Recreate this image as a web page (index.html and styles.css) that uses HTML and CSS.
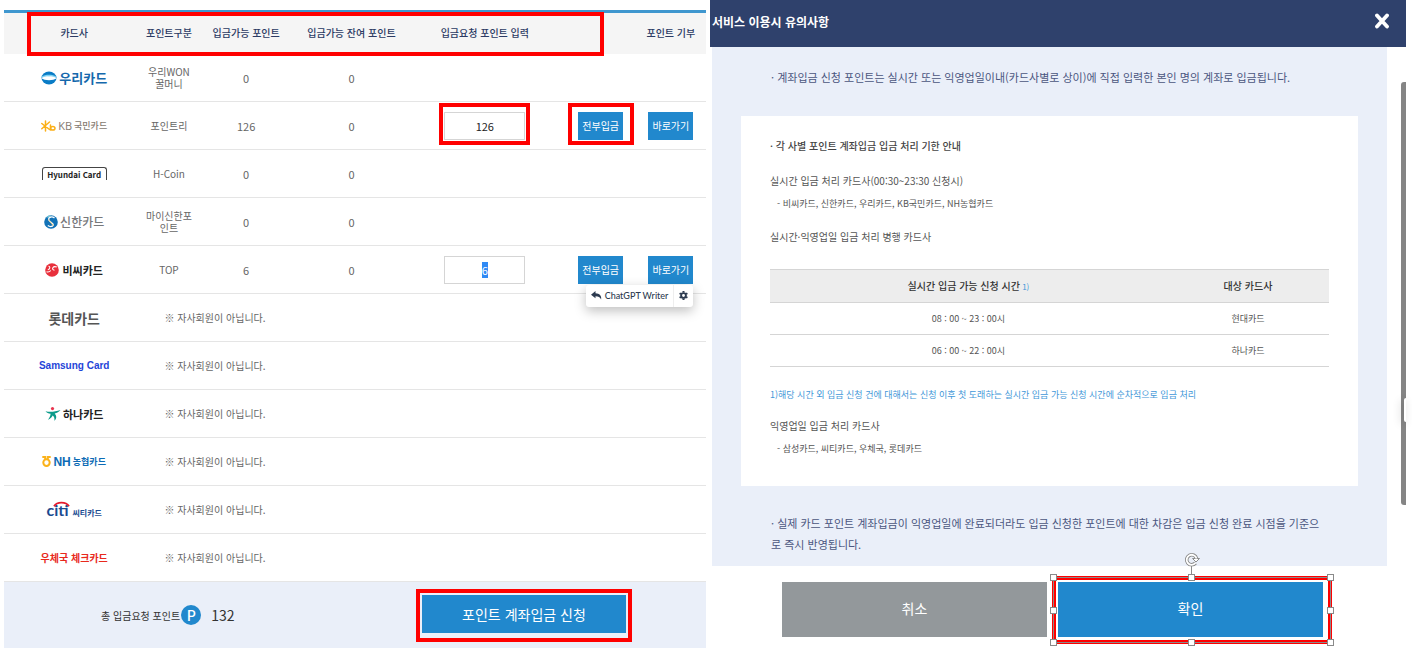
FILE: index.html
```
<!DOCTYPE html>
<html lang="ko">
<head>
    <meta charset="UTF-8">
    <meta name="viewport" content="width=device-width, initial-scale=1.0">
    <title>포인트 계좌입금 신청</title>
    <link rel="stylesheet" href="styles.css">
</head>
<body>
    <main class="page">
        <section class="points">
            <div class="table-wrap">
                <table class="point-table">
                    <colgroup>
                        <col class="col-card">
                        <col class="col-type">
                        <col class="col-avail">
                        <col class="col-remain">
                        <col class="col-input">
                        <col class="col-all">
                        <col class="col-give">
                    </colgroup>
                    <thead>
                        <tr>
                            <th>카드사</th>
                            <th>포인트구분</th>
                            <th>입금가능 포인트</th>
                            <th>입금가능 잔여 포인트</th>
                            <th>입금요청 포인트 입력</th>
                            <th></th>
                            <th>포인트 기부</th>
                        </tr>
                    </thead>
                    <tbody>
                        <tr>
                            <td>
                                <span class="brand brand-woori">
                                    <svg width="16" height="14" viewBox="0 0 16 14">
                                        <ellipse cx="8" cy="7" rx="7.5" ry="6.5" fill="#0a7cc6"/>
                                        <path d="M1 5.500C4 3 12 3 15 5.500L15.400 7Q8 3.800.6 7Z" fill="#7fd3f3"/>
                                        <path d="M.4 7.200C4 4.600 12 4.600 15.600 7.200C12.500 9.800 3.500 9.800.4 7.200Z" fill="#fff"/>
                                    </svg>우리카드
                                </span>
                            </td>
                            <td>우리WON<br>꿀머니</td>
                            <td class="num">0</td>
                            <td class="num">0</td>
                            <td></td>
                            <td></td>
                            <td></td>
                        </tr>
                        <tr>
                            <td>
                                <span class="brand brand-kb">
                                    <svg width="15" height="12" viewBox="0 0 15 12" fill="none" stroke="#fbaf17" stroke-width="1.500" stroke-linecap="round">
                                        <path d="M4.500 1v10M.8 3.500L8.500 9.500M.8 8.800L8.500 2M9.500 5V10"/>
                                        <ellipse cx="11.800" cy="8.300" rx="2.200" ry="1.800"/>
                                    </svg><b>KB</b><small>국민카드</small>
                                </span>
                            </td>
                            <td>포인트리</td>
                            <td class="num">126</td>
                            <td class="num">0</td>
                            <td>
                                <span class="marked marked-input">
                                    <input class="point-input" type="text" value="126" aria-label="KB국민카드 입금요청 포인트">
                                </span>
                            </td>
                            <td>
                                <span class="marked marked-button">
                                    <button class="btn-small" type="button">전부입금</button>
                                </span>
                            </td>
                            <td><button class="btn-small" type="button">바로가기</button></td>
                        </tr>
                        <tr>
                            <td><span class="brand brand-hyundai">Hyundai Card</span></td>
                            <td>H-Coin</td>
                            <td class="num">0</td>
                            <td class="num">0</td>
                            <td></td>
                            <td></td>
                            <td></td>
                        </tr>
                        <tr>
                            <td>
                                <span class="brand brand-shinhan">
                                    <svg width="14" height="14" viewBox="0 0 14 14">
                                        <circle cx="7" cy="7" r="6.800" fill="#1272b6"/>
                                        <path d="M2 2.200A6.800 6.800 0 0 1 7 .2L6 3z" fill="#74c4d8"/>
                                        <path d="M10.500 3C7.500.8 3.500 2.600 5 5.300s5 2.800 4.200 5C8.500 12 5.500 11.800 3.800 10.500" fill="none" stroke="#fff" stroke-width="1.300"/>
                                        <path d="M4.500 4.500L9.500 11" stroke="#e0c98a" stroke-width="1"/>
                                    </svg>신한카드
                                </span>
                            </td>
                            <td>마이신한포인트</td>
                            <td class="num">0</td>
                            <td class="num">0</td>
                            <td></td>
                            <td></td>
                            <td></td>
                        </tr>
                        <tr>
                            <td>
                                <span class="brand brand-bc">
                                    <svg width="14" height="14" viewBox="0 0 14 14">
                                        <circle cx="7" cy="7" r="6.800" fill="#e8303c"/>
                                        <path d="M3.500 3.200C5.500 3.500 5 6 2.800 6.800M11.800 4C8 2.500 5.800 6.500 9.500 7.200M1.500 8.800C3.500 9.300 4.800 8.800 5.800 7.500" fill="none" stroke="#fff" stroke-width="1.100"/>
                                    </svg>비씨카드
                                </span>
                            </td>
                            <td>TOP</td>
                            <td class="num">6</td>
                            <td class="num">0</td>
                            <td><input class="point-input" id="bcPoint" type="text" value="6" aria-label="비씨카드 입금요청 포인트"></td>
                            <td><button class="btn-small" type="button">전부입금</button></td>
                            <td>
                                <div class="give">
                                    <button class="btn-small" type="button">바로가기</button>
                                    <div class="writer">
                                        <button class="writer-main" type="button">
                                            <svg width="11" height="9" viewBox="0 0 11 9"><path d="M4.500 0L0 3.700l4.500 3.600V5.200c3 0 4.500.8 5.600 3.300C10.800 4.800 8.500 2.500 4.500 2.300z" fill="#2d3b50"/></svg>
                                            ChatGPT Writer
                                        </button>
                                        <button class="writer-set" type="button" aria-label="설정">
                                            <svg width="9" height="9" viewBox="0 0 9 9"><circle cx="4.500" cy="4.500" r="2.400" fill="none" stroke="#2d3b50" stroke-width="1.900"/><path d="M4.500 0v1.500M4.500 7.500V9M.6 2.250l1.300.75M7.100 6l1.300.75M.6 6.750L1.900 6M7.100 3l1.300-.75" stroke="#2d3b50" stroke-width="2"/></svg>
                                        </button>
                                    </div>
                                </div>
                            </td>
                        </tr>
                        <tr>
                            <td><span class="brand brand-lotte">롯데카드</span></td>
                            <td class="notice" colspan="6">※ 자사회원이 아닙니다.</td>
                        </tr>
                        <tr>
                            <td><span class="brand brand-samsung">Samsung Card</span></td>
                            <td class="notice" colspan="6">※ 자사회원이 아닙니다.</td>
                        </tr>
                        <tr>
                            <td>
                                <span class="brand brand-hana">
                                    <svg width="16" height="14" viewBox="0 0 16 14">
                                        <circle cx="7.500" cy="1.600" r="1.600" fill="#e8344e"/>
                                        <path d="M.5 4.200C5 5.500 10 4.800 15.500 3c-1.500 2-3.500 3-5.800 3.500 2 2.300 2.300 5-.4 7.300.6-2.200-.1-4-1.600-5.300C6.500 10.500 5.300 12 3 12.800c1.500-2 2.500-4 2.600-6C3.500 6.600 1.700 5.800.5 4.200z" fill="#0b9b8a"/>
                                    </svg>하나카드
                                </span>
                            </td>
                            <td class="notice" colspan="6">※ 자사회원이 아닙니다.</td>
                        </tr>
                        <tr>
                            <td>
                                <span class="brand brand-nh">
                                    <svg width="9" height="11" viewBox="0 0 9 11" fill="none" stroke="#fbb21a" stroke-width="2">
                                        <path d="M.3 1H3.200V3M8.700 1H5.800V3"/>
                                        <ellipse cx="4.500" cy="6.600" rx="3.200" ry="3.300"/>
                                    </svg><b>NH</b><small>농협카드</small>
                                </span>
                            </td>
                            <td class="notice" colspan="6">※ 자사회원이 아닙니다.</td>
                        </tr>
                        <tr>
                            <td>
                                <span class="brand brand-citi">
                                    <span class="citi-word">citi
                                        <svg width="17" height="6" viewBox="0 0 17 6"><path d="M1 5.200C4 .3 13 .3 16 5.200" fill="none" stroke="#e31b2d" stroke-width="1.700"/></svg>
                                    </span><small>씨티카드</small>
                                </span>
                            </td>
                            <td class="notice" colspan="6">※ 자사회원이 아닙니다.</td>
                        </tr>
                        <tr>
                            <td><span class="brand brand-post">우체국 체크카드</span></td>
                            <td class="notice" colspan="6">※ 자사회원이 아닙니다.</td>
                        </tr>
                    </tbody>
                </table>
                <span class="head-mark"></span>
            </div>
            <div class="total">
                <span>총 입금요청 포인트</span>
                <span class="p-icon">P</span>
                <span class="total-num">132</span>
                <span class="marked marked-apply">
                    <button class="btn-apply" type="button">포인트 계좌입금 신청</button>
                </span>
            </div>
        </section>

        <section class="modal">
            <header class="modal-head">
                <h2>서비스 이용시 유의사항</h2>
                <button class="btn-close" type="button" aria-label="닫기">
                    <svg width="14" height="16" viewBox="0 0 14 16"><path d="M2 2.500L12 13.500M12 2.500L2 13.500" stroke="#fff" stroke-width="3.800" stroke-linecap="round"/></svg>
                </button>
            </header>
            <div class="modal-body">
                <p class="guide">· 계좌입금 신청 포인트는 실시간 또는 익영업일이내(카드사별로 상이)에 직접 입력한 본인 명의 계좌로 입금됩니다.</p>
                <div class="info">
                    <h3>· 각 사별 포인트 계좌입금 입금 처리 기한 안내</h3>
                    <p class="info-title">실시간 입금 처리 카드사(00:30~23:30 신청시)</p>
                    <p class="info-sub">- 비씨카드, 신한카드, 우리카드, KB국민카드, NH농협카드</p>
                    <p class="info-title">실시간·익영업일 입금 처리 병행 카드사</p>
                    <table class="time-table">
                        <thead>
                            <tr>
                                <th class="col-time">실시간 입금 가능 신청 시간<span class="ref"> 1)</span></th>
                                <th>대상 카드사</th>
                            </tr>
                        </thead>
                        <tbody>
                            <tr>
                                <td>08 : 00 ~ 23 : 00시</td>
                                <td>현대카드</td>
                            </tr>
                            <tr>
                                <td>06 : 00 ~ 22 : 00시</td>
                                <td>하나카드</td>
                            </tr>
                        </tbody>
                    </table>
                    <p class="info-note">1)해당 시간 외 입금 신청 건에 대해서는 신청 이후 첫 도래하는 실시간 입금 가능 신청 시간에 순차적으로 입금 처리</p>
                    <p class="info-next">익영업일 입금 처리 카드사</p>
                    <p class="info-sub">- 삼성카드, 씨티카드, 우체국, 롯데카드</p>
                </div>
                <p class="guide guide-last">· 실제 카드 포인트 계좌입금이 익영업일에 완료되더라도 입금 신청한 포인트에 대한 차감은 입금 신청 완료 시점을 기준으로 즉시 반영됩니다.</p>
            </div>
            <div class="modal-buttons">
                <button class="btn-cancel" type="button">취소</button>
                <div class="confirm">
                    <button class="btn-ok" type="button">확인</button>
                    <div class="select-box">
                        <svg class="rotate" width="16" height="24" viewBox="0 0 16 24" fill="none">
                            <path d="M7.500 14v10" stroke="#8a8a8a"/>
                            <path d="M11.500 11A5 5 0 1 1 12.500 6.500" stroke="#8a8a8a" stroke-width="3.600"/>
                            <path d="M8.500 6.500h7L12 10z" fill="#fff" stroke="#8a8a8a"/>
                            <path d="M11.500 11A5 5 0 1 1 12.500 6.500" stroke="#fff" stroke-width="1.800"/>
                        </svg>
                        <i class="handle top left"></i>
                        <i class="handle top center"></i>
                        <i class="handle top right"></i>
                        <i class="handle middle left"></i>
                        <i class="handle middle right"></i>
                        <i class="handle bottom left"></i>
                        <i class="handle bottom center"></i>
                        <i class="handle bottom right"></i>
                    </div>
                </div>
            </div>
            <div class="scrollbar"><span class="scroll-tab"></span></div>
        </section>
    </main>

    <script>
        const bcPoint = document.getElementById('bcPoint');
        bcPoint.focus();
        bcPoint.select();
    </script>
</body>
</html>
```
FILE: styles.css
```
* {
    margin: 0;
    padding: 0;
    box-sizing: border-box;
}

body {
    font-family: "Noto Sans CJK KR", sans-serif;
    font-size: 10px;
    color: #666;
    background-color: #fff;
    overflow: hidden;
}

button, input {
    font-family: inherit;
    border: none;
}

button {
    cursor: pointer;
    color: #fff;
    white-space: nowrap;
}

.page {
    display: flex;
    align-items: flex-start;
    gap: 4px;
    padding: 0 6px 0 4px;
}

/* point table */
.points {
    flex: 702 1 0;
    min-width: 0;
    margin-top: 10px;
}

.table-wrap {
    position: relative;
}

.point-table {
    width: 100%;
    table-layout: fixed;
    border-collapse: separate;
    border-spacing: 0;
    border-top: 3px solid #3f97cf;
}

.col-card { width: 20%; }
.col-type { width: 7%; }
.col-avail { width: 15%; }
.col-remain { width: 15%; }
.col-input { width: 23%; }
.col-all { width: 10%; }
.col-give { width: 10%; }

.point-table th {
    height: 41px;
    padding-bottom: 2px;
    background-color: #f5f5f5;
    color: #2b3a63;
    font-weight: 500;
    white-space: nowrap;
}

.point-table td {
    height: 48px;
    border-bottom: 1px solid #e5e5e5;
    text-align: center;
    vertical-align: middle;
    line-height: 12px;
}

.point-table .num {
    font-size: 11px;
}

.point-table .notice {
    text-align: left;
    padding-left: 20px;
}

.point-input {
    display: block;
    width: 81px;
    height: 28px;
    margin: 0 auto;
    border: 1px solid #d5d5d5;
    text-align: center;
    font-size: 11px;
    color: #222;
    outline: none;
}

.point-input::selection {
    background-color: #2f8af5;
    color: #fff;
}

.btn-small {
    display: block;
    width: 45px;
    height: 28px;
    margin: 0 auto;
    background-color: #2188cd;
    font-size: 10px;
}

/* red guide boxes */
.marked {
    position: relative;
    display: block;
    width: fit-content;
    margin: 0 auto;
}

.marked::after, .head-mark {
    content: "";
    position: absolute;
    border: 4px solid #f00;
    pointer-events: none;
}

.marked-input::after {
    inset: -9px -5px -5px;
}

.marked-button::after {
    inset: -9px -11px -5px -10px;
}

.head-mark {
    top: 2px;
    left: 23px;
    right: 102px;
    height: 44px;
}

/* card company marks */
.brand {
    display: flex;
    align-items: center;
    justify-content: center;
    gap: 2px;
    font-weight: bold;
    font-size: 11px;
    line-height: 14px;
    white-space: nowrap;
}

.brand-woori {
    color: #1568ac;
    font-size: 13px;
}

.brand-kb {
    color: #857a70;
    font-weight: 500;
}

.brand-kb b {
    font-family: "Open Sans", sans-serif;
    font-weight: 500;
}

.brand small {
    font-size: 9px;
}

.brand-hyundai {
    width: 65px;
    height: 13px;
    margin: 0 auto;
    border: 1px solid #444;
    border-bottom: none;
    border-radius: 3px 3px 0 0;
    color: #222;
    font-size: 8px;
    padding-top: 2px;
}

.brand-shinhan {
    color: #77787b;
    font-size: 12px;
    font-weight: 500;
}

.brand-bc {
    color: #222;
    gap: 3px;
}

.brand-lotte {
    color: #555;
    font-size: 14px;
}

.brand-samsung {
    color: #1f45d8;
    font-family: "Liberation Sans", sans-serif;
    font-size: 10px;
}

.brand-hana {
    color: #222;
}

.brand-nh {
    color: #0d6bb5;
}

.brand-nh b {
    font-family: "Liberation Sans", sans-serif;
    font-size: 12px;
}

.brand-citi {
    color: #1a4b90;
    align-items: flex-end;
    gap: 4px;
}

.brand-citi small {
    font-size: 8px;
    line-height: 11px;
}

.citi-word {
    position: relative;
    font-family: Lato, sans-serif;
    font-size: 16px;
    line-height: 16px;
}

.citi-word svg {
    position: absolute;
    top: -1px;
    left: 7px;
}

.brand-post {
    color: #e8291c;
    font-size: 10px;
}

/* ChatGPT Writer popup */
.give {
    position: relative;
    width: 45px;
    margin: 0 auto;
}

.writer {
    position: absolute;
    top: 29px;
    right: 0;
    z-index: 2;
    display: flex;
    height: 22px;
    background-color: #fff;
    border-radius: 3px;
    box-shadow: 0 4px 12px rgba(0, 0, 0, 0.25);
}

.writer button {
    display: flex;
    align-items: center;
    background: none;
    color: #2d3b50;
    font-family: Lato, sans-serif;
    font-size: 9px;
    font-weight: 500;
}

.writer-main {
    gap: 3px;
    padding: 0 5px;
}

.writer-set {
    padding: 0 5px;
    border-left: 1px solid #eee;
}

/* total */
.total {
    display: flex;
    align-items: center;
    height: 66px;
    padding: 0 75px 0 97px;
    background-color: #eaeff9;
    color: #333;
}

.p-icon {
    width: 20px;
    height: 20px;
    margin-left: 1px;
    border-radius: 50%;
    background-color: #2188cd;
    color: #fff;
    font-size: 14px;
    font-weight: 500;
    line-height: 20px;
    text-align: center;
}

.total-num {
    margin-left: 10px;
    font-size: 14px;
}

.marked-apply {
    margin: 0 5px 2px auto;
}

.marked-apply::after {
    inset: -6px -6px -9px;
}

.btn-apply {
    display: block;
    width: 204px;
    height: 38px;
    background-color: #2188cd;
    font-size: 14px;
}

/* notice window */
.modal {
    position: relative;
    flex: 696 1 0;
    min-width: 0;
}

.modal-head {
    display: flex;
    align-items: center;
    justify-content: space-between;
    height: 47px;
    padding: 0 17px 5px 2px;
    background-color: #2f416c;
    color: #fff;
}

.modal-head h2 {
    font-size: 12px;
    font-weight: bold;
}

.btn-close {
    height: 16px;
    background: none;
}

.modal-body {
    margin: 0 19px 0 2px;
    padding: 20px 29px 11px;
    background-color: #eaeff9;
}

.guide {
    padding: 0 34px 0 30px;
    color: #4a5680;
    font-size: 11px;
    line-height: 21px;
}

.guide-last {
    margin-top: 27px;
}

.info {
    margin-top: 28px;
    padding: 20px 29px 27px;
    background-color: #fff;
    color: #555;
    line-height: 20px;
}

.info h3 {
    font-size: 10px;
    font-weight: 500;
    color: #444;
    margin-bottom: 15px;
}

.info-title {
    margin-bottom: 3px;
}

.info-sub {
    padding-left: 7px;
    font-size: 9px;
}

.info-sub + .info-title {
    margin-top: 13px;
    margin-bottom: 22px;
}

.time-table {
    width: 100%;
    table-layout: fixed;
    border-collapse: collapse;
    text-align: center;
    font-size: 9px;
}

.time-table th, .time-table td {
    border-top: 1px solid #d5d5d5;
    border-bottom: 1px solid #d5d5d5;
}

.time-table th {
    height: 33px;
    background-color: #ededed;
    color: #333;
    font-size: 10px;
    font-weight: 500;
}

.time-table td {
    height: 32px;
}

.col-time {
    width: 71%;
}

.ref {
    color: #3f97d8;
    font-size: 8px;
    font-weight: normal;
}

.info-note {
    margin: 18px 0 11px;
    color: #3f97d8;
    font-size: 9px;
}

.info-next {
    margin-bottom: 3px;
}

.modal-buttons {
    display: flex;
    gap: 11px;
    margin-top: 16px;
    padding: 0 83px 0 72px;
}

.btn-cancel, .confirm {
    flex: 1;
    height: 55px;
}

.btn-cancel, .btn-ok {
    font-size: 14px;
    padding-bottom: 4px;
}

.btn-cancel {
    background-color: #93989b;
}

.confirm {
    position: relative;
}

.btn-ok {
    width: 100%;
    height: 100%;
    background-color: #2188cd;
}

/* selected shape with its handles */
.select-box {
    position: absolute;
    inset: -6px -9px -7px -6px;
    border: 4px solid #f00;
    pointer-events: none;
}

.select-box::before {
    content: "";
    position: absolute;
    inset: -3px;
    border: 1px solid #8a8a8a;
}

.handle {
    position: absolute;
    width: 7px;
    height: 7px;
    border: 1px solid #8a8a8a;
    background-color: #fff;
}

.handle.top { top: -6px; }
.handle.middle { top: calc(50% - 3px); }
.handle.bottom { bottom: -6px; }
.handle.left { left: -6px; }
.handle.center { left: calc(50% - 4px); }
.handle.right { right: -6px; }

.rotate {
    position: absolute;
    left: calc(50% - 8px);
    top: -28px;
}

.scrollbar {
    position: absolute;
    top: 82px;
    right: 0;
    width: 5px;
    height: 423px;
    border-radius: 3px 0 0 3px;
    background-color: #858585;
}

.scroll-tab {
    position: absolute;
    top: 316px;
    right: 0;
    width: 2px;
    height: 24px;
    border-radius: 2px 0 0 2px;
    background-color: #fff;
    box-shadow: -2px 2px 8px rgba(0, 0, 0, 0.3);
}
```
